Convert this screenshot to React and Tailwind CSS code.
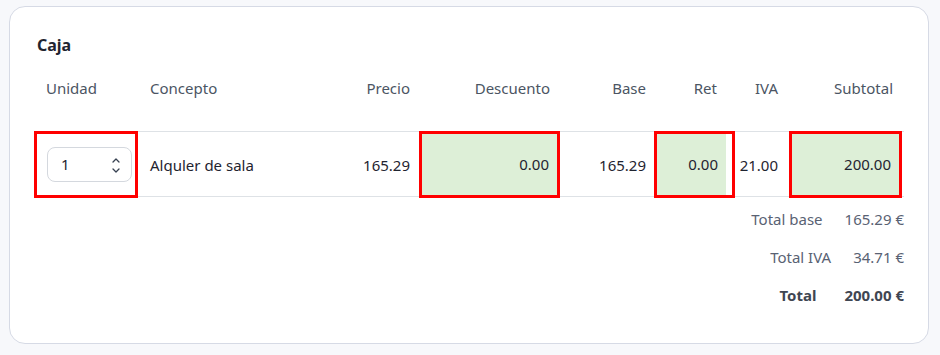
import React from "react";

const cols = "grid grid-cols-[104px_192px_89px_141px_94px_81px_54px_113px]";

const Spinner = () => (
  <svg width="10" height="22" viewBox="0 0 10 22" fill="none" stroke="#374151" strokeWidth="1.3" strokeLinecap="round" strokeLinejoin="round">
    <path d="M2 8 L5 5 L8 8" />
    <path d="M2 15 L5 18 L8 15" />
  </svg>
);

const GreenCell = ({ value, inset = false }) => (
  <div className="border-[3px] border-[#ff0000] h-[67px] -mt-px flex">
    <div className={`bg-[#ddefd7] h-full flex items-center justify-end pr-[8px] ${inset ? "w-[69px]" : "flex-1"}`}>
      {value}
    </div>
  </div>
);

const totals = [
  { label: "Total base", value: "165.29 €" },
  { label: "Total IVA", value: "34.71 €" },
  { label: "Total", value: "200.00 €", bold: true },
];

export default function App() {
  return (
    <div className="min-h-screen bg-[#f7f8fb] pt-[6px] pl-[9px] font-['Noto_Sans',sans-serif] text-[15px]">
      <div className="w-[920px] h-[338px] bg-white border border-[#d6dae5] rounded-2xl px-[24px] pt-[26px]">
        <h2 className="pl-[3px] text-[16px] leading-6 font-bold text-[#1f2430]">Caja</h2>

        {/* cabecera */}
        <div className={`${cols} mt-[13px] h-9 items-center text-[#4b5563] mb-[25px]`}>
          <div className="pl-3">Unidad</div>
          <div className="pl-3">Concepto</div>
          <div className="text-right pr-[9px]">Precio</div>
          <div className="text-right pr-[10px]">Descuento</div>
          <div className="text-right pr-[8px]">Base</div>
          <div className="text-right pr-[18px]">Ret</div>
          <div className="text-right pr-[11px]">IVA</div>
          <div className="text-right pr-[9px]">Subtotal</div>
        </div>

        {/* linea */}
        <div className={`${cols} h-[66px] border-y border-[#dee2e6] items-start text-[#1f2430]`}>
          <div className="border-[3px] border-[#ff0000] h-[67px] -mt-px flex items-center pl-[10px]">
            <div className="w-[85px] h-[35px] border border-[#d4d8de] rounded-lg flex items-center justify-between pl-[13px] pr-[10px]">
              <span>1</span>
              <Spinner />
            </div>
          </div>
          <div className="pl-3 self-center">Alquler de sala</div>
          <div className="text-right pr-[9px] self-center">165.29</div>
          <GreenCell value="0.00" />
          <div className="text-right pr-[8px] self-center">165.29</div>
          <GreenCell value="0.00" inset />
          <div className="text-right pr-[11px] self-center">21.00</div>
          <GreenCell value="200.00" />
        </div>

        {/* totales */}
        <div className="mt-[3px] flex flex-col items-end">
          {totals.map((t) => (
            <div key={t.label} className={`h-[38px] flex items-center ${t.bold ? "gap-[28px] font-bold text-[#3f4652]" : "gap-[22px] text-[#596273]"}`}>
              <span>{t.label}</span>
              <span>{t.value}</span>
            </div>
          ))}
        </div>
      </div>
    </div>
  );
}
